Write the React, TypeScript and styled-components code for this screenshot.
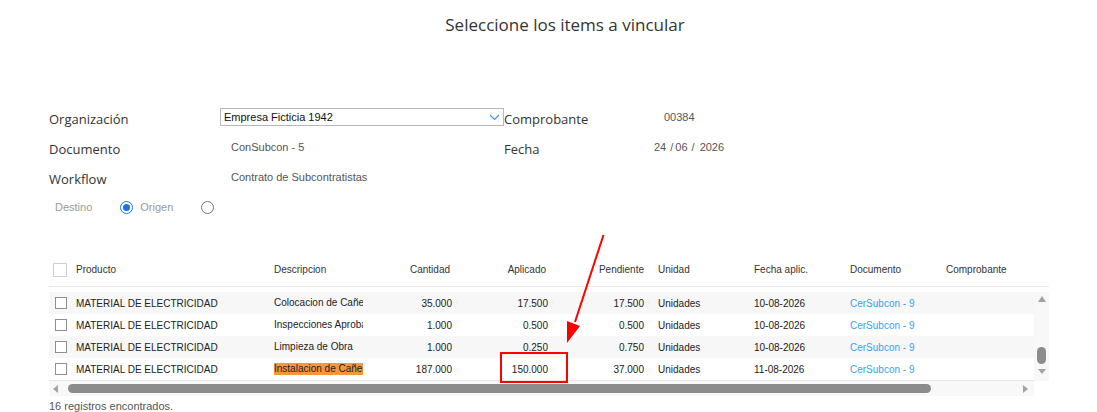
import React from "react";
import styled, { createGlobalStyle } from "styled-components";

const GlobalStyle = createGlobalStyle`
  html, body { margin: 0; padding: 0; background: #fff; }
  body { font-family: "Liberation Sans", Arial, sans-serif; }
  * { box-sizing: border-box; }
`;

const Page = styled.div`
  position: relative;
  width: 1097px;
  height: 412px;
  overflow: hidden;
  background: #fff;
`;

const Title = styled.h1`
  margin: 0;
  height: 104px;
  padding-top: 13px;
  text-align: center;
  font-family: "Open Sans", sans-serif;
  font-weight: 400;
  font-size: 17px;
  line-height: 24px;
  color: #333;
  padding-left: 33px;
`;

const Form = styled.div`
  padding-left: 49px;
`;

const FormRow = styled.div`
  display: grid;
  grid-template-columns: 171px 284px 150px 1fr;
  height: 30px;
  align-items: start;
`;

const Label = styled.div`
  font-family: "Open Sans", sans-serif;
  font-size: 13px;
  line-height: 30px;
  color: #333;
  white-space: nowrap;
`;

const Value = styled.div<{ $indent?: number }>`
  font-size: 11px;
  line-height: 26px;
  color: #555;
  padding-left: ${(p) => p.$indent ?? 0}px;
  white-space: nowrap;
`;

const SelectBox = styled.div`
  margin-top: 4px;
  height: 18px;
  border: 1px solid #b8b8b8;
  display: flex;
  align-items: center;
  justify-content: space-between;
  padding: 0 3px 0 3px;
  font-size: 11px;
  color: #111;
`;

const DateSep = styled.span<{ $l: number; $r: number }>`
  margin: 0 ${(p) => p.$r}px 0 ${(p) => p.$l}px;
`;

const RadioRow = styled.div`
  display: flex;
  align-items: center;
  height: 26px;
  padding-left: 6px;
  font-size: 11px;
  color: #999;
`;

const RadioText = styled.span<{ $gap: number }>`
  margin-right: ${(p) => p.$gap}px;
`;

const Radio = styled.span<{ $checked?: boolean }>`
  width: 13px;
  height: 13px;
  border-radius: 50%;
  border: 1px solid ${(p) => (p.$checked ? "#1a73e8" : "#767676")};
  margin-right: 7px;
  display: flex;
  align-items: center;
  justify-content: center;
  &::after {
    content: "";
    display: ${(p) => (p.$checked ? "block" : "none")};
    width: 7px;
    height: 7px;
    border-radius: 50%;
    background: #1a73e8;
  }
`;

const Table = styled.div`
  margin: 33px 0 0 49px;
  width: 1000px;
  font-size: 10px;
  color: #222;
`;

const cols = "27px 198px 106px 80px 96px 96px 102px 96px 96px 88px";

const HeaderRow = styled.div`
  display: grid;
  grid-template-columns: ${cols} 15px;
  height: 34px;
  align-items: center;
  border-bottom: 1px solid #e6e6e6;
  color: #333;
`;

const BodyWrap = styled.div`
  display: flex;
  padding-top: 5px;
`;

const Rows = styled.div`
  width: 985px;
  border-bottom: 1px solid #e6e6e6;
`;

const Row = styled.div<{ $alt?: boolean }>`
  display: grid;
  grid-template-columns: ${cols};
  height: 22px;
  align-items: center;
  background: ${(p) => (p.$alt ? "#f7f7f7" : "#fff")};
`;

const Cell = styled.div<{ $right?: boolean; $pad?: number; $rpad?: number }>`
  white-space: nowrap;
  overflow: hidden;
  text-align: ${(p) => (p.$right ? "right" : "left")};
  padding-right: ${(p) => (p.$right ? p.$rpad ?? 8 : 0)}px;
  padding-left: ${(p) => p.$pad ?? 0}px;
`;

const Clip = styled.span<{ $mark?: boolean }>`
  display: inline-block;
  max-width: 89px;
  overflow: hidden;
  vertical-align: middle;
  line-height: 12px;
  background: ${(p) => (p.$mark ? "#f7963c" : "transparent")};
`;

const Link = styled.span`
  color: #3a9ff0;
`;

const Check = styled.span<{ $big?: boolean }>`
  display: block;
  width: ${(p) => (p.$big ? 14 : 12)}px;
  height: ${(p) => (p.$big ? 14 : 12)}px;
  margin-left: ${(p) => (p.$big ? 4 : 6)}px;
  border: 1px solid ${(p) => (p.$big ? "#cfcfcf" : "#8f8f8f")};
  background: #fff;
`;

const VScroll = styled.div`
  width: 15px;
  background: #f8f8f8;
  display: flex;
  flex-direction: column;
  align-items: center;
  padding-top: 4px;
`;

const Thumb = styled.div`
  width: 9px;
  height: 17px;
  border-radius: 5px;
  background: #8c8c8c;
  margin-top: 45px;
`;

const DownArrow = styled.span`
  display: block;
  margin-top: 5px;
  line-height: 0;
`;

const HScroll = styled.div`
  width: 985px;
  height: 15px;
  background: #f8f8f8;
  display: flex;
  align-items: center;
  padding: 0 0 0 4px;
`;

const HThumb = styled.div`
  width: 863px;
  height: 9px;
  border-radius: 5px;
  background: #8c8c8c;
  margin: 0 92px 0 10px;
`;

const Footer = styled.div`
  margin: 4px 0 0 49px;
  font-size: 11px;
  color: #555;
`;

const Overlay = styled.svg`
  position: absolute;
  left: 0;
  top: 0;
  pointer-events: none;
`;

const Tri = ({ dir }: { dir: "up" | "down" | "left" | "right" }) => {
  const pts = {
    up: "0,6 4,0 8,6",
    down: "0,0 8,0 4,5",
    left: "5,0 5,8 0,4",
    right: "0,0 0,8 5,4",
  }[dir];
  const w = dir === "up" || dir === "down" ? 8 : 5;
  const h = dir === "up" ? 6 : dir === "down" ? 5 : 8;
  return (
    <svg width={w} height={h} viewBox={`0 0 ${w} ${h}`}>
      <polygon points={pts} fill="#a3a3a3" />
    </svg>
  );
};

type Item = {
  desc: string;
  cant: string;
  apl: string;
  pend: string;
  fecha: string;
  mark?: boolean;
};

const items: Item[] = [
  { desc: "Colocacion de Cañerías", cant: "35.000", apl: "17.500", pend: "17.500", fecha: "10-08-2026" },
  { desc: "Inspecciones Aprobadas", cant: "1.000", apl: "0.500", pend: "0.500", fecha: "10-08-2026" },
  { desc: "Limpieza de Obra", cant: "1.000", apl: "0.250", pend: "0.750", fecha: "10-08-2026" },
  { desc: "Instalacion de Cañerías", cant: "187.000", apl: "150.000", pend: "37.000", fecha: "11-08-2026", mark: true },
];

export default function App() {
  return (
    <Page>
      <GlobalStyle />
      <Title>Seleccione los items a vincular</Title>
      <Form>
        <FormRow>
          <Label>Organización</Label>
          <SelectBox>
            <span>Empresa Ficticia 1942</span>
            <svg width="11" height="7" viewBox="0 0 11 7">
              <polyline points="1,1 5.5,5.5 10,1" fill="none" stroke="#4a90e2" strokeWidth="1.2" />
            </svg>
          </SelectBox>
          <Label>Comprobante</Label>
          <Value $indent={10}>00384</Value>
        </FormRow>
        <FormRow>
          <Label>Documento</Label>
          <Value $indent={11}>ConSubcon - 5</Value>
          <Label>Fecha</Label>
          <Value>
            24<DateSep $l={4} $r={2}>/</DateSep>06<DateSep $l={4} $r={5}>/</DateSep>2026
          </Value>
        </FormRow>
        <FormRow>
          <Label>Workflow</Label>
          <Value $indent={11}>Contrato de Subcontratistas</Value>
        </FormRow>
        <RadioRow>
          <RadioText $gap={28}>Destino</RadioText>
          <Radio $checked />
          <RadioText $gap={28}>Origen</RadioText>
          <Radio />
        </RadioRow>
      </Form>

      <Table>
        <HeaderRow>
          <Check $big />
          <Cell>Producto</Cell>
          <Cell>Descripcion</Cell>
          <Cell $right $rpad={10}>Cantidad</Cell>
          <Cell $right $rpad={10}>Aplicado</Cell>
          <Cell $right>Pendiente</Cell>
          <Cell $pad={6}>Unidad</Cell>
          <Cell>Fecha aplic.</Cell>
          <Cell>Documento</Cell>
          <Cell>Comprobante</Cell>
          <span />
        </HeaderRow>
        <BodyWrap>
          <Rows>
            {items.map((it, i) => (
              <Row key={i} $alt={i % 2 === 0}>
                <Check />
                <Cell>MATERIAL DE ELECTRICIDAD</Cell>
                <Cell>
                  <Clip $mark={it.mark}>{it.desc}</Clip>
                </Cell>
                <Cell $right>{it.cant}</Cell>
                <Cell $right>{it.apl}</Cell>
                <Cell $right>{it.pend}</Cell>
                <Cell $pad={6}>Unidades</Cell>
                <Cell>{it.fecha}</Cell>
                <Cell>
                  <Link>CerSubcon - 9</Link>
                </Cell>
                <Cell />
              </Row>
            ))}
          </Rows>
          <VScroll>
            <Tri dir="up" />
            <Thumb />
            <DownArrow>
              <Tri dir="down" />
            </DownArrow>
          </VScroll>
        </BodyWrap>
        <HScroll>
          <Tri dir="left" />
          <HThumb />
          <Tri dir="right" />
        </HScroll>
      </Table>
      <Footer>16 registros encontrados.</Footer>

      <Overlay width="1097" height="412" viewBox="0 0 1097 412">
        <rect x="501" y="353" width="66" height="29" fill="none" stroke="#ff0000" strokeWidth="2" />
        <line x1="603.5" y1="235" x2="575" y2="322" stroke="#ff0000" strokeWidth="2" />
        <polygon points="567,343 567,321 580,326" fill="#ff0000" />
      </Overlay>
    </Page>
  );
}
